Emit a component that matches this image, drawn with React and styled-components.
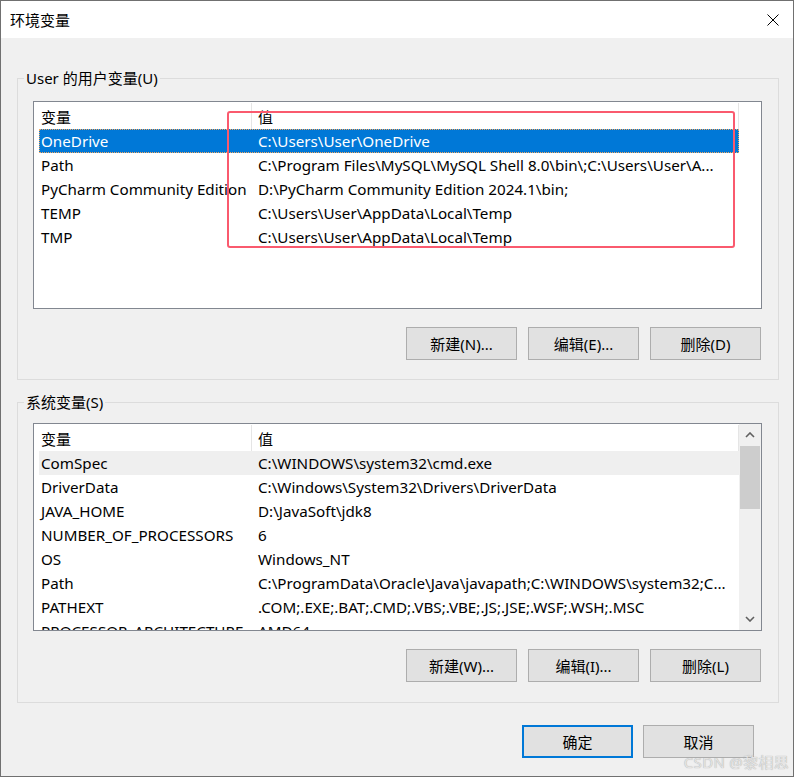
import styled, { createGlobalStyle } from "styled-components";

const GlobalStyle = createGlobalStyle`
  html, body {
    margin: 0;
    padding: 0;
    background: #ffffff;
  }
  body {
    font-family: "Noto Sans", "Noto Sans CJK SC", sans-serif;
    color: #000000;
  }
`;

const userVars = [
  { name: "OneDrive", value: "C:\\Users\\User\\OneDrive", selected: true },
  { name: "Path", value: "C:\\Program Files\\MySQL\\MySQL Shell 8.0\\bin\\;C:\\Users\\User\\A..." },
  { name: "PyCharm Community Edition", value: "D:\\PyCharm Community Edition 2024.1\\bin;" },
  { name: "TEMP", value: "C:\\Users\\User\\AppData\\Local\\Temp" },
  { name: "TMP", value: "C:\\Users\\User\\AppData\\Local\\Temp" },
];

const systemVars = [
  { name: "ComSpec", value: "C:\\WINDOWS\\system32\\cmd.exe", hover: true },
  { name: "DriverData", value: "C:\\Windows\\System32\\Drivers\\DriverData" },
  { name: "JAVA_HOME", value: "D:\\JavaSoft\\jdk8" },
  { name: "NUMBER_OF_PROCESSORS", value: "6" },
  { name: "OS", value: "Windows_NT" },
  { name: "Path", value: "C:\\ProgramData\\Oracle\\Java\\javapath;C:\\WINDOWS\\system32;C..." },
  { name: "PATHEXT", value: ".COM;.EXE;.BAT;.CMD;.VBS;.VBE;.JS;.JSE;.WSF;.WSH;.MSC" },
  { name: "PROCESSOR_ARCHITECTURE", value: "AMD64" },
];

const Window = styled.div`
  position: relative;
  width: 794px;
  height: 777px;
  box-sizing: border-box;
  border: 1px solid #707070;
  background: #f0f0f0;
  display: flex;
  flex-direction: column;
  overflow: hidden;
`;

const TitleBar = styled.div`
  height: 37px;
  flex: none;
  background: #ffffff;
  display: flex;
  align-items: center;
  justify-content: space-between;
  padding: 0 14px 0 9px;
`;

const Title = styled.span`
  font-family: "Noto Sans CJK SC", sans-serif;
  font-size: 15px;
  line-height: 20px;
`;

const CloseIcon = styled.svg`
  display: block;
  width: 12px;
  height: 12px;
  margin-top: 1px;
`;

const Content = styled.div`
  flex: 1;
  display: flex;
  flex-direction: column;
  padding: 0 14px 0 16px;
`;

const Group = styled.fieldset`
  margin: ${(p) => p.$top}px 0 0;
  padding: 0;
  border: 1px solid #dcdcdc;
  min-width: 0;
`;

const Legend = styled.legend`
  margin-left: 6px;
  padding: 0 2px;
  font-size: 15px;
  line-height: 20px;
`;

const GroupBody = styled.div`
  display: flex;
  flex-direction: column;
  padding: ${(p) => p.$top}px 16px ${(p) => p.$bottom}px 15px;
`;

const ListBox = styled.div`
  height: 208px;
  box-sizing: border-box;
  border: 1px solid #828790;
  background: #ffffff;
  display: flex;
  overflow: hidden;
`;

const Table = styled.div`
  width: 705px;
  flex: none;
  padding-left: 5px;
  box-sizing: border-box;
`;

const HeaderRow = styled.div`
  display: grid;
  grid-template-columns: 213px 487px;
  height: 27px;
`;

const HeaderCell = styled.div`
  box-sizing: border-box;
  height: 26px;
  margin-top: 1px;
  border-right: 1px solid #e5e5e5;
  padding-left: ${(p) => p.$pad}px;
  font-family: "Noto Sans CJK SC", sans-serif;
  font-size: 15px;
  line-height: 28px;
`;

const Row = styled.div`
  display: grid;
  grid-template-columns: 213px 487px;
  height: 24px;
  background: ${(p) => (p.$selected ? "#0078d7" : p.$hover ? "#efefef" : "transparent")};
  color: ${(p) => (p.$selected ? "#ffffff" : "#000000")};
  outline: ${(p) => (p.$selected ? "1px dotted #f4a860" : "none")};
  outline-offset: -1px;
`;

const Cell = styled.div`
  padding-left: ${(p) => p.$pad}px;
  font-size: 15.2px;
  line-height: 24px;
  white-space: nowrap;
  overflow: hidden;
`;

const ScrollBar = styled.div`
  width: 22px;
  flex: none;
  background: #f0f0f0;
  display: flex;
  flex-direction: column;
`;

const ArrowButton = styled.div`
  height: 22px;
  flex: none;
  display: flex;
  align-items: center;
  justify-content: center;
`;

const Track = styled.div`
  flex: 1;
  padding: 0 1px;
`;

const Thumb = styled.div`
  height: 63px;
  background: #cdcdcd;
`;

const ButtonRow = styled.div`
  display: flex;
  justify-content: flex-end;
  gap: ${(p) => p.$gap ?? 11}px;
  margin-top: ${(p) => p.$top}px;
  padding-right: ${(p) => p.$right ?? 1}px;
`;

const Button = styled.button`
  width: 111px;
  height: 33px;
  box-sizing: border-box;
  margin: 0;
  padding: 0;
  background: #e1e1e1;
  border: ${(p) => (p.$default ? "2px solid #0078d7" : "1px solid #adadad")};
  font-family: "Noto Sans", "Noto Sans CJK SC", sans-serif;
  font-size: 15px;
  color: #000000;
`;

const Highlight = styled.div`
  position: absolute;
  left: 226px;
  top: 110px;
  width: 508px;
  height: 137px;
  box-sizing: border-box;
  border: 2px solid #fa5a6e;
  border-radius: 3px;
  pointer-events: none;
`;

const Watermark = styled.div`
  position: absolute;
  right: 4px;
  bottom: 4px;
  font-family: "Noto Sans", "Noto Sans CJK SC", sans-serif;
  font-size: 15px;
  color: #e4e4e4;
  text-shadow: 0 0 1px #9a9a9a;
  letter-spacing: 0.3px;
`;

const Chevron = ({ down }) => (
  <svg width="10" height="6" viewBox="0 0 10 6">
    <polyline
      points={down ? "1,1 5,5 9,1" : "1,5 5,1 9,5"}
      fill="none"
      stroke="#606060"
      strokeWidth="1.6"
    />
  </svg>
);

const VarList = ({ rows, scroll }) => (
  <ListBox>
    <Table>
      <HeaderRow>
        <HeaderCell $pad={2}>变量</HeaderCell>
        <HeaderCell $pad={6}>值</HeaderCell>
      </HeaderRow>
      {rows.map((r, i) => (
        <Row key={i} $selected={r.selected} $hover={r.hover}>
          <Cell $pad={2}>{r.name}</Cell>
          <Cell $pad={6}>{r.value}</Cell>
        </Row>
      ))}
    </Table>
    {scroll && (
      <ScrollBar>
        <ArrowButton>
          <Chevron />
        </ArrowButton>
        <Track>
          <Thumb />
        </Track>
        <ArrowButton>
          <Chevron down />
        </ArrowButton>
      </ScrollBar>
    )}
  </ListBox>
);

export default function App() {
  return (
    <>
      <GlobalStyle />
      <Window>
        <TitleBar>
          <Title>环境变量</Title>
          <CloseIcon viewBox="0 0 12 12">
            <path d="M0.5 0.5 L11.5 11.5 M11.5 0.5 L0.5 11.5" stroke="#000" strokeWidth="1" />
          </CloseIcon>
        </TitleBar>
        <Content>
          <Group $top={30}>
            <Legend>User 的用户变量(U)</Legend>
            <GroupBody $top={13} $bottom={19}>
              <VarList rows={userVars} />
              <ButtonRow $top={18}>
                <Button>新建(N)...</Button>
                <Button>编辑(E)...</Button>
                <Button>删除(D)</Button>
              </ButtonRow>
            </GroupBody>
          </Group>
          <Group $top={12}>
            <Legend>系统变量(S)</Legend>
            <GroupBody $top={11} $bottom={20}>
              <VarList rows={systemVars} scroll />
              <ButtonRow $top={18}>
                <Button>新建(W)...</Button>
                <Button>编辑(I)...</Button>
                <Button>删除(L)</Button>
              </ButtonRow>
            </GroupBody>
          </Group>
          <ButtonRow $top={22} $gap={10} $right={25}>
            <Button $default>确定</Button>
            <Button>取消</Button>
          </ButtonRow>
        </Content>
        <Highlight />
        <Watermark>CSDN @黎相思</Watermark>
      </Window>
    </>
  );
}
